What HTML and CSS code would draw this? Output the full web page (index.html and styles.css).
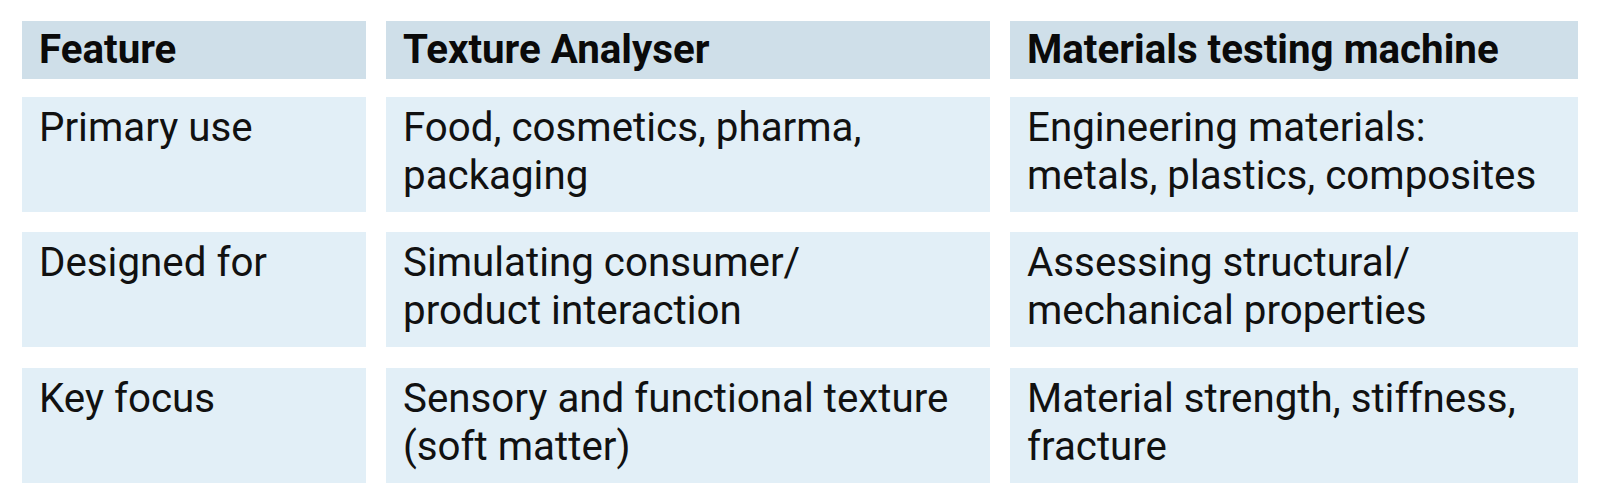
FILE: index.html
```html
<!DOCTYPE html>
<html lang="en">
<head>
<meta charset="utf-8">
<title>Texture Analyser vs Materials testing machine</title>
<link rel="stylesheet" href="styles.css">
</head>
<body>
<div class="compare">
  <div class="row head">
    <div class="cell">Feature</div>
    <div class="cell">Texture Analyser</div>
    <div class="cell">Materials testing machine</div>
  </div>
  <div class="row">
    <div class="cell">Primary use</div>
    <div class="cell">Food, cosmetics, pharma, packaging</div>
    <div class="cell">Engineering materials:<br>metals, plastics, composites</div>
  </div>
  <div class="row">
    <div class="cell">Designed for</div>
    <div class="cell">Simulating consumer/<br>product interaction</div>
    <div class="cell">Assessing structural/<br>mechanical properties</div>
  </div>
  <div class="row last">
    <div class="cell">Key focus</div>
    <div class="cell">Sensory and functional texture (soft matter)</div>
    <div class="cell">Material strength, stiffness, fracture</div>
  </div>
</div>
</body>
</html>
```
FILE: styles.css
```css
html, body {
  margin: 0;
  background: #ffffff;
}

body {
  font-family: Roboto, "Liberation Sans", sans-serif;
  color: #111111;
}

.compare {
  display: flex;
  flex-direction: column;
  gap: 20px;
  padding: 21px 22px 0 22px;
  width: 1556px;
}

.row {
  display: grid;
  grid-template-columns: 344px 604px 568px;
  column-gap: 20px;
  height: 115px;
}

.row.last {
  margin-top: 1px;
}

.cell {
  background: #e2eff7;
  font-size: 40.3px;
  line-height: 48px;
  padding: 7px 12px 0 17px;
}

.row.head {
  height: 58px;
  margin-bottom: -2px;
}

.row.head .cell {
  background: #cfdfe9;
  font-weight: 700;
  padding-top: 5px;
  color: #0a0a0a;
}
```
